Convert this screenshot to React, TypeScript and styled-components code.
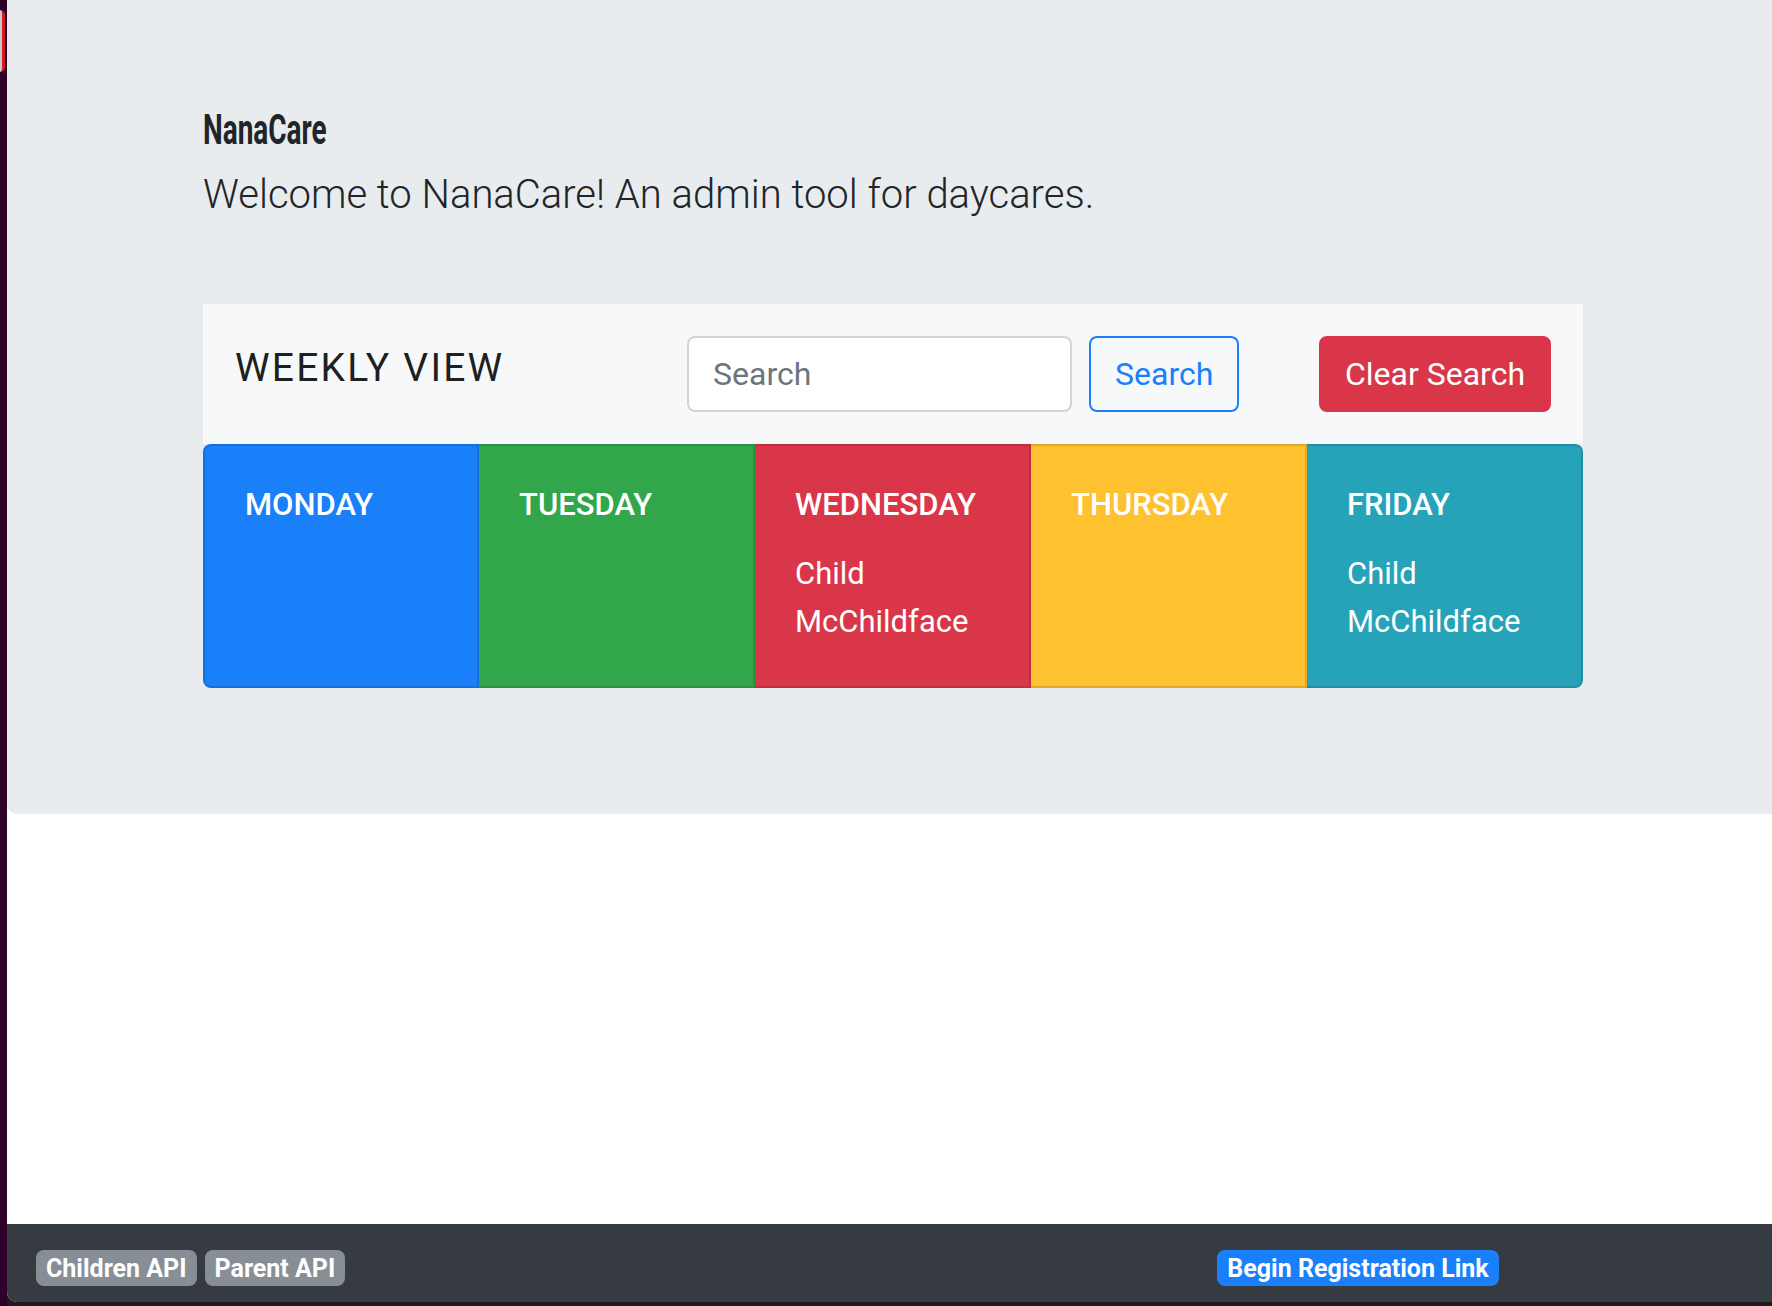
import React from "react";
import styled, { createGlobalStyle } from "styled-components";

const GlobalStyle = createGlobalStyle`
  html, body {
    margin: 0;
    padding: 0;
    background: #2b0228;
  }
  body {
    font-family: Roboto, "Liberation Sans", sans-serif;
    color: #212529;
  }
  * {
    box-sizing: border-box;
  }
`;

const Desktop = styled.div`
  display: flex;
  height: 1306px;
  width: 1772px;
  overflow: hidden;
  background: #1c1c1e;
`;

const DesktopEdge = styled.div`
  flex: 0 0 7px;
  background: #2e0129;
  display: flex;
  flex-direction: column;
  padding-top: 10px;
`;

const DockIcon = styled.div`
  width: 5px;
  height: 62px;
  border-radius: 0 6px 6px 0;
  background: #c9c9c9;
  border-right: 3px solid #d11c24;
`;

const Window = styled.div`
  flex: 1;
  height: 1302px;
  display: flex;
  flex-direction: column;
  background: #ffffff;
  border-bottom-left-radius: 10px;
  overflow: hidden;
`;

const Jumbotron = styled.header`
  background: #e8ecef;
  padding: 104px 0 128px 196px;
  border-bottom-left-radius: 10px;
`;

const Brand = styled.h1`
  margin: 0;
  font-family: Roboto, "Liberation Sans", sans-serif;
  font-weight: 700;
  font-size: 43px;
  line-height: 50px;
  color: #212529;
  transform: scaleX(0.65);
  transform-origin: left center;
`;

const Lead = styled.p`
  margin: 12px 0 0;
  font-size: 40px;
  line-height: 58px;
  font-weight: 300;
  color: #212529;
`;

const WeekCard = styled.section`
  width: 1380px;
  margin-top: 80px;
`;

const WeekHeader = styled.div`
  display: flex;
  align-items: flex-start;
  background: #f7f8fa;
  padding: 32px;
  height: 140px;
`;

const WeekTitle = styled.h2`
  flex: 0 0 452px;
  margin: 0;
  padding-top: 8px;
  font-size: 39px;
  line-height: 48px;
  font-weight: 400;
  letter-spacing: 2.2px;
  color: #1d1f21;
`;

const SearchInput = styled.input`
  width: 385px;
  height: 76px;
  border: 2px solid #ced4da;
  border-radius: 8px;
  padding: 0 24px;
  font-family: Roboto, "Liberation Sans", sans-serif;
  font-size: 32px;
  color: #495057;
  background: #ffffff;
  outline: none;

  &::placeholder {
    color: #6c757d;
  }
`;

const Button = styled.button<{ $variant: "outline" | "danger" }>`
  height: 76px;
  padding: 0 24px;
  margin-left: ${(p) => (p.$variant === "outline" ? "17px" : "auto")};
  border-radius: 8px;
  border: 2px solid ${(p) => (p.$variant === "outline" ? "#1a7ffb" : "#da3649")};
  background: ${(p) => (p.$variant === "outline" ? "transparent" : "#da3649")};
  color: ${(p) => (p.$variant === "outline" ? "#1a7ffb" : "#ffffff")};
  font-family: Roboto, "Liberation Sans", sans-serif;
  font-size: 32px;
  cursor: pointer;
`;

const DayRow = styled.div`
  display: grid;
  grid-template-columns: repeat(5, 1fr);
  height: 242px;
`;

const DayCard = styled.div<{ $bg: string }>`
  background: ${(p) => p.$bg};
  color: #ffffff;
  padding: 40px;
  border: 2px solid rgba(0, 0, 0, 0.12);
  border-left-width: 0;

  &:first-child {
    border-left-width: 2px;
    border-radius: 8px 0 0 8px;
  }

  &:last-child {
    border-radius: 0 8px 8px 0;
  }
`;

const DayName = styled.h5`
  margin: 0 0 26px;
  font-size: 31px;
  line-height: 38px;
  font-weight: 500;
`;

const ChildName = styled.p`
  margin: 0;
  font-size: 31px;
  line-height: 48px;
  font-weight: 400;
`;

const Spacer = styled.div`
  flex: 1;
`;

const Footer = styled.footer`
  display: grid;
  grid-template-columns: 2fr 1fr;
  align-items: center;
  height: 78px;
  padding: 10px 30px 0 29px;
  background: #363a41;
`;

const BadgeGroup = styled.div<{ $offset?: number }>`
  display: flex;
  gap: 8px;
  padding-left: ${(p) => p.$offset ?? 0}px;
`;

const Badge = styled.span<{ $tone: "gray" | "blue" }>`
  display: inline-flex;
  align-items: center;
  height: 36px;
  padding: 0 10px;
  border-radius: 8px;
  background: ${(p) => (p.$tone === "gray" ? "#878e96" : "#1a7ffb")};
  color: #ffffff;
  font-size: 25px;
  font-weight: 700;
`;

const days = [
  { name: "MONDAY", bg: "#1980fa", kids: [] as string[] },
  { name: "TUESDAY", bg: "#31a64a", kids: [] },
  { name: "WEDNESDAY", bg: "#da3649", kids: ["Child", "McChildface"] },
  { name: "THURSDAY", bg: "#fec12f", kids: [] },
  { name: "FRIDAY", bg: "#26a3b9", kids: ["Child", "McChildface"] },
];

export default function App() {
  return (
    <>
      <GlobalStyle />
      <Desktop>
        <DesktopEdge>
          <DockIcon />
        </DesktopEdge>
        <Window>
          <Jumbotron>
            <Brand>NanaCare</Brand>
            <Lead>Welcome to NanaCare! An admin tool for daycares.</Lead>

            <WeekCard>
              <WeekHeader>
                <WeekTitle>WEEKLY VIEW</WeekTitle>
                <SearchInput placeholder="Search" />
                <Button $variant="outline">Search</Button>
                <Button $variant="danger">Clear Search</Button>
              </WeekHeader>
              <DayRow>
                {days.map((day) => (
                  <DayCard key={day.name} $bg={day.bg}>
                    <DayName>{day.name}</DayName>
                    {day.kids.map((kid) => (
                      <ChildName key={kid}>{kid}</ChildName>
                    ))}
                  </DayCard>
                ))}
              </DayRow>
            </WeekCard>
          </Jumbotron>

          <Spacer />

          <Footer>
            <BadgeGroup>
              <Badge $tone="gray">Children API</Badge>
              <Badge $tone="gray">Parent API</Badge>
            </BadgeGroup>
            <BadgeGroup $offset={44}>
              <Badge $tone="blue">Begin Registration Link</Badge>
            </BadgeGroup>
          </Footer>
        </Window>
      </Desktop>
    </>
  );
}
